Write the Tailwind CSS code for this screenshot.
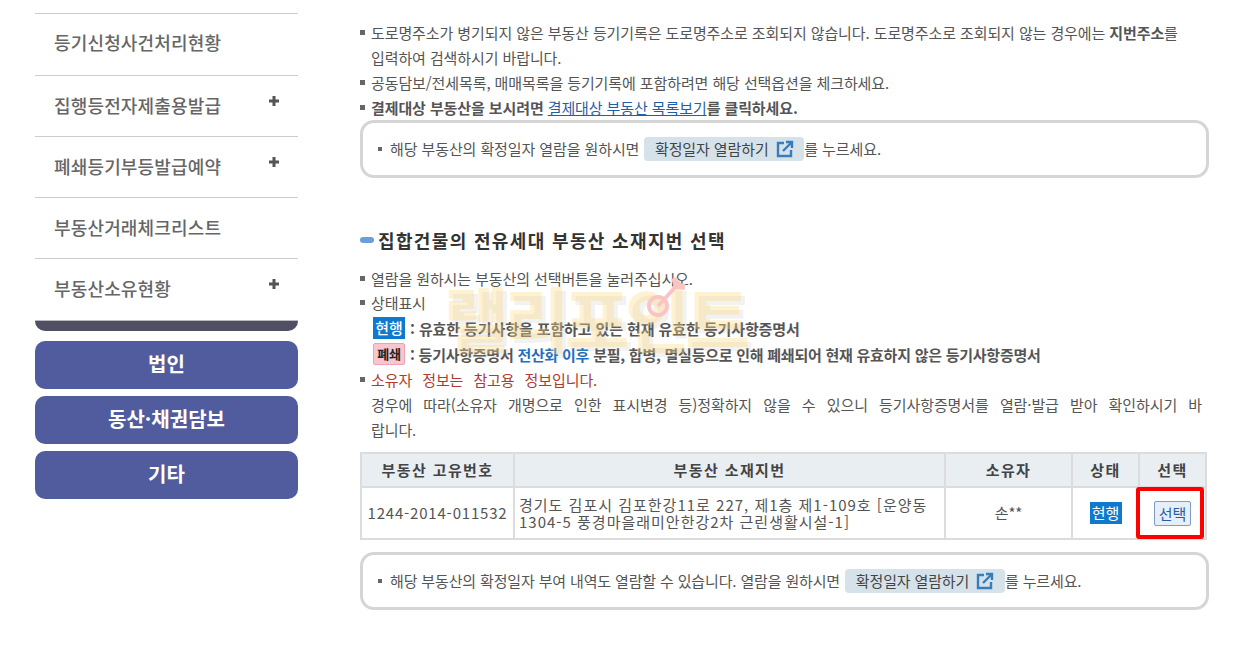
<!DOCTYPE html>
<html lang="ko">
<head>
    <meta charset="UTF-8">
    <title>부동산 소재지번 선택</title>
    <script src="https://cdn.jsdelivr.net/npm/@tailwindcss/browser@4"></script>
</head>
<body class="bg-white h-[654px] overflow-hidden font-['Noto_Sans_CJK_KR','Noto_Sans',sans-serif] text-[#555] text-[15px]">
<div class="flex items-start">
    <!-- Left menu -->
    <aside class="w-[263px] ml-[35px] mt-[13px] shrink-0">
        <ul class="text-[18px] font-medium text-[#666] border-t border-[#ccc] tracking-[0.15px]">
            <li class="h-[62px] border-b border-[#ccc] pl-[19px] pb-[4px] flex items-center">등기신청사건처리현황</li>
            <li class="h-[61px] border-b border-[#ccc] pl-[19px] pr-[19px] pb-[2px] flex items-center justify-between">집행등전자제출용발급
                <svg class="-mt-[9px]" width="10" height="10" viewBox="0 0 10 10" fill="#555"><path d="M3.5 0h3v3.5H10v3H6.5V10h-3V6.5H0v-3h3.5z"/></svg></li>
            <li class="h-[61px] border-b border-[#ccc] pl-[19px] pr-[19px] pb-[2px] flex items-center justify-between">폐쇄등기부등발급예약
                <svg class="-mt-[9px]" width="10" height="10" viewBox="0 0 10 10" fill="#555"><path d="M3.5 0h3v3.5H10v3H6.5V10h-3V6.5H0v-3h3.5z"/></svg></li>
            <li class="h-[61px] border-b border-[#ccc] pl-[19px] pb-[2px] flex items-center">부동산거래체크리스트</li>
            <li class="h-[61px] pl-[19px] pr-[19px] pb-[2px] flex items-center justify-between">부동산소유현황
                <svg class="-mt-[9px]" width="10" height="10" viewBox="0 0 10 10" fill="#555"><path d="M3.5 0h3v3.5H10v3H6.5V10h-3V6.5H0v-3h3.5z"/></svg></li>
        </ul>
        <div class="h-[11px] bg-[#514f63] rounded-b-[10px] border-t border-[#bbb]"></div>
        <div class="mt-[10px] flex flex-col gap-[7px] text-white text-[20px] font-bold">
            <div class="h-[48px] pb-[2px] rounded-[10px] bg-[#515c9e] flex items-center justify-center">법인</div>
            <div class="h-[48px] pb-[2px] rounded-[10px] bg-[#515c9e] flex items-center justify-center">동산·채권담보</div>
            <div class="h-[48px] pb-[2px] rounded-[10px] bg-[#515c9e] flex items-center justify-center">기타</div>
        </div>
    </aside>

    <!-- Main -->
    <main class="ml-[62px] w-[849px] pt-[20px] tracking-[-0.1px]">
        <ul class="leading-[25px]">
            <li class="flex"><span class="w-[5px] h-[5px] bg-[#666] mt-[10px] mr-[6px] shrink-0"></span><p>도로명주소가 병기되지 않은 부동산 등기기록은 도로명주소로 조회되지 않습니다. 도로명주소로 조회되지 않는 경우에는 <b class="font-bold">지번주소</b>를<br>입력하여 검색하시기 바랍니다.</p></li>
            <li class="flex"><span class="w-[5px] h-[5px] bg-[#666] mt-[10px] mr-[6px] shrink-0"></span><p>공동담보/전세목록, 매매목록을 등기기록에 포함하려면 해당 선택옵션을 체크하세요.</p></li>
            <li class="flex"><span class="w-[5px] h-[5px] bg-[#666] mt-[10px] mr-[6px] shrink-0"></span><p><b class="font-semibold">결제대상 부동산을 보시려면</b> <a class="text-[#1f5fa8] underline">결제대상 부동산 목록보기</a><b class="font-semibold">를 클릭하세요.</b></p></li>
        </ul>
        <div class="h-[58px] border-[3px] border-[#d5d5d5] rounded-[14px] pl-[15px] flex items-center">
            <span class="w-[4px] h-[4px] bg-[#666] mr-[8px]"></span>
            <span>해당 부동산의 확정일자 열람을 원하시면</span>
            <span class="ml-[5px] h-[24px] w-[160px] bg-[#d6e2ea] rounded-[4px] flex items-center justify-center gap-[7px] text-[#444]">확정일자 열람하기
                <svg width="18" height="18" viewBox="0 0 18 18" fill="none" stroke="#3a7cb8" stroke-width="2.4"><path d="M8 3H2v13h13v-6"/><path d="M7 11l8-8M10 2h6v6" /></svg>
            </span>
            <span>를 누르세요.</span>
        </div>

        <h2 class="mt-[49px] flex items-center text-[18px] font-bold text-[#333] tracking-[1.35px] h-[26px]">
            <span class="w-[14px] h-[6px] bg-[#6a9fdc] rounded-full mr-[4px]"></span>집합건물의 전유세대 부동산 소재지번 선택
        </h2>

        <div class="relative mt-[13px] leading-[25px] w-[842px]">
            <ul>
                <li class="flex h-[24px]"><span class="w-[5px] h-[5px] bg-[#666] mt-[10px] mr-[6px] shrink-0"></span><p>열람을 원하시는 부동산의 선택버튼을 눌러주십시오.</p></li>
                <li class="flex"><span class="w-[5px] h-[5px] bg-[#666] mt-[10px] mr-[6px] shrink-0"></span><p>상태표시</p></li>
                <li class="flex items-center h-[26px] pl-[13px] font-semibold"><span class="bg-[#0f78cf] text-white font-medium w-[32px] h-[22px] leading-[22px] text-center mr-[5px]">현행</span>: 유효한 등기사항을 포함하고 있는 현재 유효한 등기사항증명서</li>
                <li class="flex items-center h-[26px] pl-[13px] font-semibold tracking-[-0.25px]"><span class="bg-[#f7c6cf] text-[#222] border border-[#f0a0b0] rounded-[2px] w-[32px] h-[22px] leading-[20px] text-center text-[13px] mr-[5px]">폐쇄</span>: 등기사항증명서 <span class="text-[#1f6fc0] mx-[4px]">전산화 이후</span> 분필, 합병, 멸실등으로 인해 폐쇄되어 현재 유효하지 않은 등기사항증명서</li>
                <li class="flex"><span class="w-[5px] h-[5px] bg-[#666] mt-[10px] mr-[6px] shrink-0"></span><p class="text-[#b03a2e] [word-spacing:6px]">소유자 정보는 참고용 정보입니다.</p></li>
                <li class="pl-[11px] text-justify [word-spacing:6.5px]">경우에 따라(소유자 개명으로 인한 표시변경 등)정확하지 않을 수 있으니 등기사항증명서를 열람·발급 받아 확인하시기 바랍니다.</li>
            </ul>
            <!-- watermark over the text -->
            <div class="absolute left-[84px] top-[11px] text-[70px] font-black leading-[80px] text-[#ffd980]/35 tracking-[-4px] [text-shadow:4px_4px_0_rgba(150,150,150,0.12)] pointer-events-none">랠리포인트</div>
            <svg class="absolute left-[282px] top-[7px] pointer-events-none" width="50" height="50" viewBox="0 0 50 50" fill="none" stroke="#fbc4c4" stroke-width="4"><circle cx="16" cy="33" r="9"/><path d="M16 33L38 9"/><path d="M32 5l3 8 8 1" stroke-width="6"/></svg>
        </div>

        <table class="mt-[10px] w-[847px] border-collapse table-fixed text-center">
            <thead class="bg-[#e9eef3] text-[#444]">
                <tr class="h-[34px]">
                    <th class="w-[153px] border-2 border-[#dcdcdc] font-semibold tracking-[1.4px]">부동산 고유번호</th>
                    <th class="w-[431px] border-2 border-[#dcdcdc] font-semibold tracking-[1.4px]">부동산 소재지번</th>
                    <th class="w-[127px] border-2 border-[#dcdcdc] font-semibold tracking-[1.4px]">소유자</th>
                    <th class="w-[67px] border-2 border-[#dcdcdc] font-semibold tracking-[1.4px]">상태</th>
                    <th class="border-2 border-[#dcdcdc] font-semibold tracking-[1.4px]">선택</th>
                </tr>
            </thead>
            <tbody>
                <tr class="h-[52px]">
                    <td class="border-2 border-[#dcdcdc] tracking-[0.8px]">1244-2014-011532</td>
                    <td class="border-2 border-[#dcdcdc] text-left pl-[4px] leading-[17px] tracking-[1px]">경기도 김포시 김포한강11로 227, 제1층 제1-109호 [운양동<br>1304-5 풍경마을래미안한강2차 근린생활시설-1]</td>
                    <td class="border-2 border-[#dcdcdc]">손**</td>
                    <td class="border-2 border-[#dcdcdc]"><span class="inline-block bg-[#0f78cf] text-white w-[32px] h-[22px] leading-[22px]">현행</span></td>
                    <td class="border-2 border-[#dcdcdc] relative">
                        <span class="inline-block w-[37px] h-[25px] leading-[23px] border border-[#7c9cc4] rounded-[2px] bg-[#e6eff7] text-[#1f5fa8]">선택</span>
                        <!-- red annotation box -->
                        <span class="absolute -left-[4px] -top-[1px] right-[1px] -bottom-[1px] border-[4px] border-[#f00] rounded-[3px] pointer-events-none"></span>
                    </td>
                </tr>
            </tbody>
        </table>

        <div class="mt-[12px] h-[58px] border-[3px] border-[#d5d5d5] rounded-[14px] pl-[15px] flex items-center tracking-[-0.15px]">
            <span class="w-[4px] h-[4px] bg-[#666] mr-[8px]"></span>
            <span>해당 부동산의 확정일자 부여 내역도 열람할 수 있습니다. 열람을 원하시면</span>
            <span class="ml-[5px] h-[24px] w-[160px] bg-[#d6e2ea] rounded-[4px] flex items-center justify-center gap-[7px] text-[#444]">확정일자 열람하기
                <svg width="18" height="18" viewBox="0 0 18 18" fill="none" stroke="#3a7cb8" stroke-width="2.4"><path d="M8 3H2v13h13v-6"/><path d="M7 11l8-8M10 2h6v6" /></svg>
            </span>
            <span>를 누르세요.</span>
        </div>
    </main>
</div>
</body>
</html>
